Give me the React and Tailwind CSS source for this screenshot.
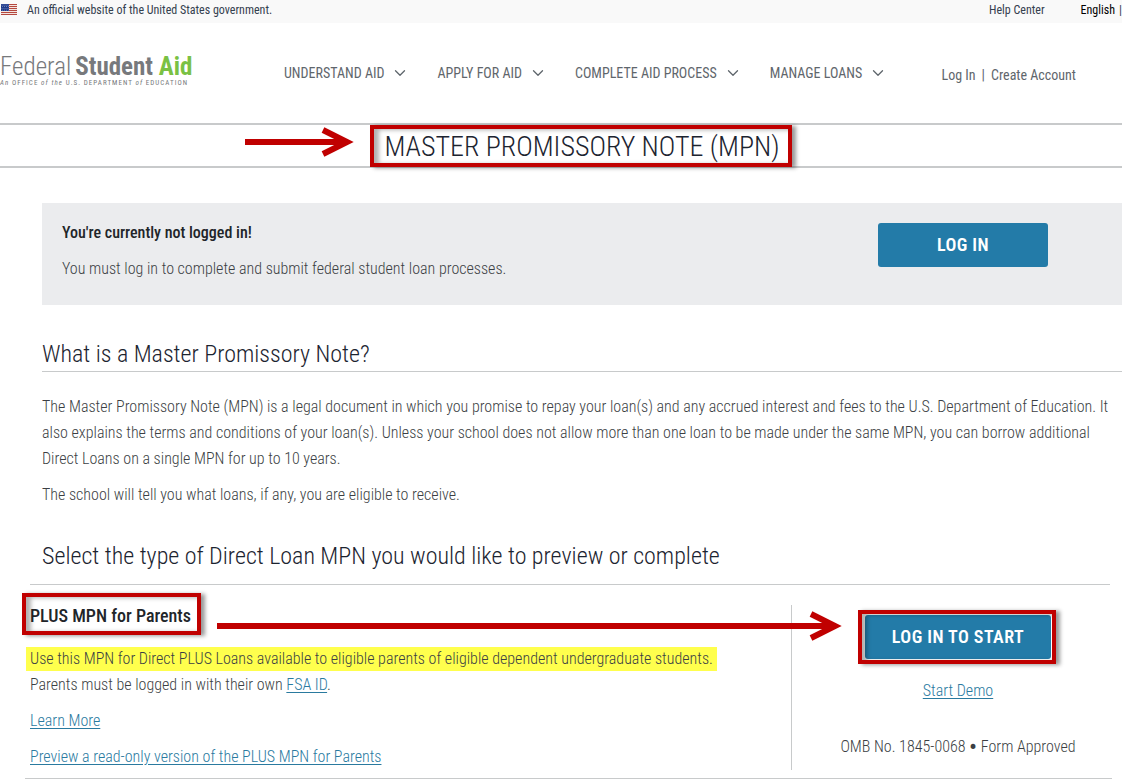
import { ChevronDown } from "lucide-react";

const NAV = ["UNDERSTAND AID", "APPLY FOR AID", "COMPLETE AID PROCESS", "MANAGE LOANS"];

const STARS = [0, 1, 2, 3].flatMap((r) => [0, 1, 2, 3].map((c) => [1 + c * 2 + (r % 2) * 0.6, 1 + r * 1.7]));

function Flag() {
  return (
    <svg className="h-[11px] w-[17px]" viewBox="0 0 17 11" aria-hidden="true">
      <rect x="1" width="16" height="11" fill="#f3e4e0" />
      {[0, 2, 4, 6, 8, 10].map((y) => (
        <rect key={y} x="1" y={y} width="16" height="1" fill="#b5483f" />
      ))}
      <rect x="1" width="8" height="7" fill="#1f3a8a" />
      {STARS.map(([x, y], i) => (
        <circle key={i} cx={x + 1} cy={y} r="0.4" fill="#dfe6f7" />
      ))}
    </svg>
  );
}

function Arrow({ className, length }) {
  return (
    <svg
      className={className}
      width={length}
      height="30"
      viewBox={`0 0 ${length} 30`}
      fill="none"
      stroke="#c00000"
      strokeWidth="6"
      aria-hidden="true"
    >
      <path d={`M0 15H${length - 8}`} />
      <path d={`M${length - 31} 3L${length - 7} 15L${length - 31} 27`} />
    </svg>
  );
}

function Frame({ className }) {
  return (
    <span
      aria-hidden="true"
      className={`pointer-events-none absolute border-4 border-[#c00000] shadow-[4px_1px_4px_rgba(0,0,0,0.4),inset_5px_1px_4px_rgba(0,0,0,0.3)] ${className}`}
    />
  );
}

const link = "text-[#2a7a9f] underline underline-offset-2";
const button = "rounded-[3px] bg-[#237ba8] text-lg font-semibold tracking-wide text-white";

export default function App() {
  return (
    <div className="min-h-screen bg-white pr-3 font-['Roboto_Condensed',Roboto,'Liberation_Sans',sans-serif] text-base font-light text-[#3c3f44]">
      <div className="flex h-[23px] items-center bg-[#f9f9f9] pb-1 text-xs font-normal leading-4 text-[#34404e]">
        <Flag />
        <span className="ml-2.5">An official website of the United States government.</span>
        <a href="#help" className="ml-auto">Help Center</a>
        <a href="#english" className="ml-9 text-black">English</a>
        <span className="ml-1">|</span>
      </div>

      <header className="flex h-[100px] items-center text-sm font-normal text-[#5f666c]">
        <a href="#home" className="-mt-1 block w-[284px] whitespace-nowrap text-[#77797c]">
          <span className="block text-[25px] leading-6">
            <span className="font-light">Federal</span>
            <span className="ml-1 font-bold">
              Student <span className="text-[#7ac143]">Aid</span>
            </span>
          </span>
          <span className="block text-[7px] font-normal leading-2 tracking-[0.15em]">
            <i>An</i> OFFICE <i>of the</i> U.S. DEPARTMENT <i>of</i> EDUCATION
          </span>
        </a>
        <nav className="flex gap-7">
          {NAV.map((item) => (
            <button key={item} type="button" className="flex items-center gap-[7px] whitespace-nowrap">
              {item}
              <ChevronDown className="size-[18px]" strokeWidth={1.75} />
            </button>
          ))}
        </nav>
        <div className="ml-auto mr-[46px] mt-1 flex gap-1.5 whitespace-nowrap">
          <a href="#login">Log In</a>
          <span>|</span>
          <a href="#create">Create Account</a>
        </div>
      </header>

      <div className="relative flex h-[45px] items-center justify-center border-y-2 border-[#c8cacb] pl-[42px]">
        <Arrow className="absolute left-[245px] top-0.5" length={109} />
        <div className="relative">
          <h1 className="whitespace-nowrap pt-0.5 text-[28px] leading-[38px] text-[#1c2430]">
            MASTER PROMISSORY NOTE (MPN)
          </h1>
          <Frame className="-left-3.5 -right-3 -inset-y-px" />
        </div>
      </div>

      <main>
        <section className="ml-[42px] mt-[35px] flex h-[102px] items-start justify-between bg-[#ebecee] py-5 pl-5 pr-[74px] leading-5">
          <div>
            <h2 className="font-medium text-[#212529]">You're currently not logged in!</h2>
            <p className="mt-4">You must log in to complete and submit federal student loan processes.</p>
          </div>
          <button type="button" className={`h-11 w-[170px] ${button}`}>LOG IN</button>
        </section>

        <section className="ml-[42px] mt-8">
          <h2 className="border-b border-[#c8cacb] text-2xl leading-[34px] text-[#1c2430]">
            What is a Master Promissory Note?
          </h2>
          <div className="mt-[22px] leading-[26px]">
            <p>
              The Master Promissory Note (MPN) is a legal document in which you promise to repay your loan(s) and
              any accrued interest and fees to the U.S. Department of Education. It also explains the terms and
              conditions of your loan(s). Unless your school does not allow more than one loan to be made under the
              same MPN, you can borrow additional Direct Loans on a single MPN for up to 10 years.
            </p>
            <p className="mt-2.5">The school will tell you what loans, if any, you are eligible to receive.</p>
          </div>
        </section>

        <h2 className="ml-[42px] mt-[31px] text-2xl leading-[34px] text-[#1c2430]">
          Select the type of Direct Loan MPN you would like to preview or complete
        </h2>

        <section className="ml-[25px] mr-2.5 border-b border-[#c8cacb] pb-2">
          <hr className="ml-[5px] mr-0.5 mt-[11px] border-[#c8cacb]" />
          <div className="mt-5 flex">
            <div className="flex-1 pl-[5px]">
              <div className="relative flex h-[41px] items-start">
                <div className="relative">
                  <h3 className="text-lg font-medium leading-[22px] text-[#212529]">PLUS MPN for Parents</h3>
                  <Frame className="-left-2 -right-2.5 -bottom-2 -top-3" />
                </div>
                <Arrow className="absolute left-[187px] top-1.5 z-10" length={625} />
              </div>
              <div className="leading-[26px]">
                <p>
                  <span className="-ml-1 inline-block bg-[#ffff4d] pl-1 pr-1 leading-6">
                    Use this MPN for Direct PLUS Loans available to eligible parents of eligible dependent
                    undergraduate students.
                  </span>
                </p>
                <p>
                  Parents must be logged in with their own <a href="#fsa-id" className={link}>FSA ID</a>.
                </p>
                <p className="mt-2.5">
                  <a href="#learn" className={link}>Learn More</a>
                </p>
                <p className="mt-2.5">
                  <a href="#preview" className={link}>Preview a read-only version of the PLUS MPN for Parents</a>
                </p>
              </div>
            </div>
            <div className="flex w-[321px] flex-col items-center border-l border-[#c8cacb] pl-3 pt-2.5 leading-[26px]">
              <div className="relative">
                <button type="button" className={`block h-11 w-[186px] ${button}`}>LOG IN TO START</button>
                <Frame className="-left-[7px] -right-[5px] -inset-y-[5px]" />
              </div>
              <a href="#demo" className={`mt-[19px] ${link}`}>Start Demo</a>
              <p className="mt-[30px]">
                OMB No. 1845-0068 <b className="text-2xl leading-4 align-[-3px]">•</b> Form Approved
              </p>
            </div>
          </div>
        </section>
      </main>
    </div>
  );
}
